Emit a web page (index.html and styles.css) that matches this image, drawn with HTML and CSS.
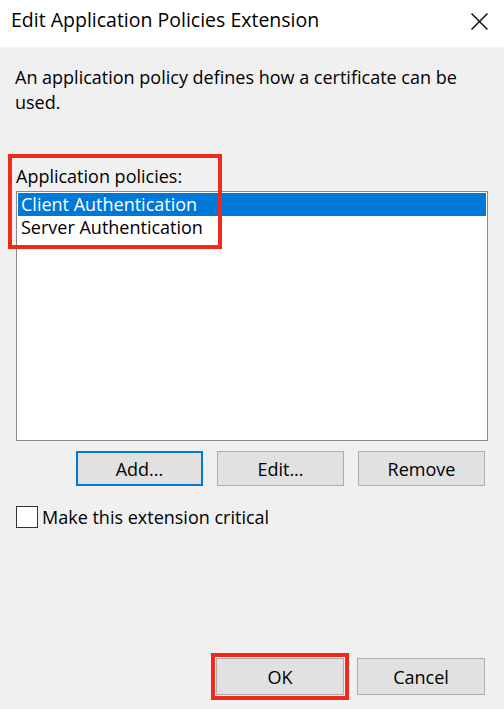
FILE: index.html
```html
<!DOCTYPE html>
<html>
<head>
<meta charset="utf-8">
<link rel="stylesheet" href="styles.css">
</head>
<body>
<div class="dialog">
  <div class="titlebar">
    <span class="title">Edit Application Policies Extension</span>
    <svg class="close" width="17" height="17" viewBox="0 0 17 17"><path d="M0.5 0.5 L16.5 16.5 M16.5 0.5 L0.5 16.5" stroke="#111" stroke-width="1.5" fill="none"/></svg>
  </div>
  <div class="content">
    <p class="desc">An application policy defines how a certificate can be used.</p>
    <div class="policies">
      <div class="label">Application policies:</div>
      <div class="listbox">
        <div class="item selected">Client Authentication</div>
        <div class="item">Server Authentication</div>
      </div>
      <div class="annot"></div>
    </div>
    <div class="list-buttons">
      <button class="btn default">Add...</button>
      <button class="btn">Edit...</button>
      <button class="btn">Remove</button>
    </div>
    <label class="check"><span class="box"></span><span>Make this extension critical</span></label>
    <div class="footer">
      <button class="btn ok">OK</button>
      <button class="btn">Cancel</button>
    </div>
  </div>
</div>
</body>
</html>
```
FILE: styles.css
```css
* { box-sizing: border-box; }
html, body { margin: 0; padding: 0; }
body {
  font-family: "Open Sans", "Noto Sans", sans-serif;
  font-size: 18px;
  color: #000;
  background: #f0f0f0;
}
.dialog {
  width: 504px;
  height: 709px;
  display: flex;
  flex-direction: column;
}
.titlebar {
  height: 47px;
  background: #fff;
  display: flex;
  align-items: flex-start;
  justify-content: space-between;
  padding: 6px 16px 0 11px;
}
.title { font-size: 19.5px; line-height: 28px; }
.close { margin-top: 7px; }
.content {
  flex: 1;
  background: #f0f0f0;
  display: flex;
  flex-direction: column;
  padding: 0 16px 0 16px;
}
.desc {
  margin: 18px 0 0 -1px;
  line-height: 25px;
  padding-right: 20px;
}
.policies {
  position: relative;
  margin-top: 49px;
}
.label { line-height: 24px; height: 27px; }
.listbox {
  height: 250px;
  width: 472px;
  background: #fff;
  border: 1px solid #8a8a8a;
  padding: 1px;
}
.item {
  line-height: 23px;
  height: 23px;
  padding-left: 3px;
}
.item.selected { background: #0078d7; color: #fff; }
.annot {
  position: absolute;
  left: -8px;
  top: -10px;
  width: 214px;
  height: 95px;
  border: 4px solid #f0291b;
}
.list-buttons {
  display: flex;
  justify-content: flex-end;
  gap: 14px;
  margin-top: 10px;
  padding-right: 3px;
}
.btn {
  font-family: inherit;
  font-size: 18px;
  color: #000;
  width: 127px;
  height: 35px;
  background: #e1e1e1;
  border: 1px solid #adadad;
  padding: 0;
}
.btn.default { border: 2px solid #0078d7; }
.check {
  display: flex;
  align-items: center;
  gap: 4px;
  margin-top: 19px;
}
.box {
  width: 22px;
  height: 22px;
  border: 1px solid #333;
  background: #fff;
}
.footer {
  margin-top: auto;
  margin-bottom: 14px;
  display: flex;
  align-items: center;
  justify-content: flex-end;
  gap: 13px;
  padding-right: 3px;
}
.footer .btn { height: 37px; width: 128px; }
.ok { outline: 4px solid #f0291b; outline-offset: 1px; }
```
